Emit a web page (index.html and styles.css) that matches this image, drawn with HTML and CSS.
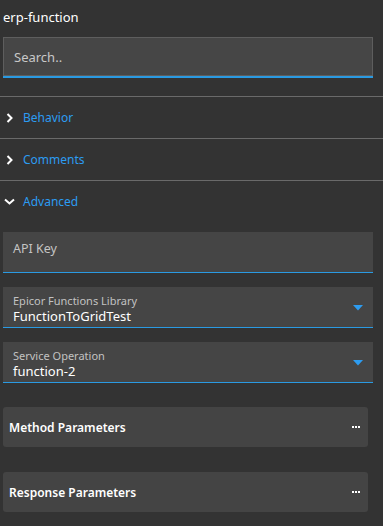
FILE: index.html
```html
<!DOCTYPE html>
<html>
<head>
<meta charset="utf-8">
<link rel="stylesheet" href="styles.css">
</head>
<body>
<div class="panel">
  <div class="title">erp-function</div>
  <div class="search-wrap">
    <div class="search">Search..</div>
  </div>
  <div class="section">
    <div class="sec-head">
      <svg class="chev" width="8" height="10" viewBox="0 0 8 10"><path d="M1.5 1 L5.5 5 L1.5 9" fill="none" stroke="#fff" stroke-width="2"/></svg>
      <span>Behavior</span>
    </div>
  </div>
  <div class="section">
    <div class="sec-head">
      <svg class="chev" width="8" height="10" viewBox="0 0 8 10"><path d="M1.5 1 L5.5 5 L1.5 9" fill="none" stroke="#fff" stroke-width="2"/></svg>
      <span>Comments</span>
    </div>
  </div>
  <div class="section open">
    <div class="sec-head">
      <svg class="chev down" width="11" height="8" viewBox="0 0 11 8"><path d="M1 1.5 L5.5 5.5 L10 1.5" fill="none" stroke="#fff" stroke-width="2"/></svg>
      <span>Advanced</span>
    </div>
    <div class="fields">
      <div class="field empty"><span class="ph">API Key</span></div>
      <div class="field select">
        <div class="fcol">
          <span class="lbl">Epicor Functions Library</span>
          <span class="val">FunctionToGridTest</span>
        </div>
        <svg class="tri" width="10" height="6" viewBox="0 0 10 6"><path d="M0 0 H10 L5 5.5 Z" fill="#2d9cf0"/></svg>
      </div>
      <div class="field select">
        <div class="fcol">
          <span class="lbl">Service Operation</span>
          <span class="val">function-2</span>
        </div>
        <svg class="tri" width="10" height="6" viewBox="0 0 10 6"><path d="M0 0 H10 L5 5.5 Z" fill="#2d9cf0"/></svg>
      </div>
      <div class="card"><span>Method Parameters</span><span class="dots"><i></i><i></i><i></i></span></div>
      <div class="card"><span>Response Parameters</span><span class="dots"><i></i><i></i><i></i></span></div>
    </div>
  </div>
</div>
</body>
</html>
```
FILE: styles.css
```css
html, body {
  margin: 0;
  padding: 0;
  background: #333333;
}
body {
  font-family: "Noto Sans", "Open Sans", sans-serif;
  color: #ffffff;
  width: 383px;
  height: 526px;
  overflow: hidden;
}
.panel {
  display: flex;
  flex-direction: column;
}
.title {
  font-size: 13px;
  line-height: 18px;
  padding: 8px 3px 0;
  height: 29px;
  box-sizing: border-box;
}
.search-wrap {
  padding: 8px 10px 20px 3px;
}
.search {
  height: 39px;
  box-sizing: border-box;
  background: #464646;
  border: 1px solid #5e5e5e;
  box-shadow: 0 2px 0 #2a9ae2;
  color: #c8c8c8;
  font-size: 13px;
  padding-left: 10px;
  display: flex;
  align-items: center;
}
.section {
  border-top: 1px solid #6a6a6a;
}
.sec-head {
  height: 41px;
  display: flex;
  align-items: center;
  gap: 9px;
  padding-left: 6px;
  color: #2c9cf2;
  font-size: 12px;
}
.chev {
  display: block;
  width: 8px;
}
.chev.down {
  width: 11px;
  margin-left: -2px;
  margin-right: -1px;
}
.fields {
  display: flex;
  flex-direction: column;
  padding: 10px 10px 0 3px;
}
.field {
  height: 41px;
  box-sizing: border-box;
  background: #454545;
  border-bottom: 1px solid #2a9ae2;
  margin-bottom: 14px;
  display: flex;
  align-items: center;
}
.field.empty {
  align-items: flex-start;
}
.ph {
  color: #c4c4c4;
  font-size: 12.5px;
  padding: 8px 0 0 10px;
}
.fcol {
  flex: 1;
  display: flex;
  flex-direction: column;
  padding-left: 10px;
  padding-top: 4px;
}
.lbl {
  font-size: 11px;
  line-height: 14px;
  color: #c2c2c2;
}
.val {
  font-size: 13px;
  line-height: 17px;
  color: #ffffff;
}
.tri {
  margin-right: 10px;
  margin-top: 2px;
  display: block;
}
.card {
  height: 40px;
  margin-right: 5px;
  margin-top: 10px;
  margin-bottom: 15px;
  border-radius: 3px;
  background: #444444;
  display: flex;
  align-items: center;
  justify-content: space-between;
  padding: 0 8px 0 6px;
  font-size: 12px;
  font-weight: 600;
}
.dots {
  display: flex;
  gap: 1px;
}
.dots i {
  display: block;
  width: 2px;
  height: 2px;
  background: #ffffff;
}
```
